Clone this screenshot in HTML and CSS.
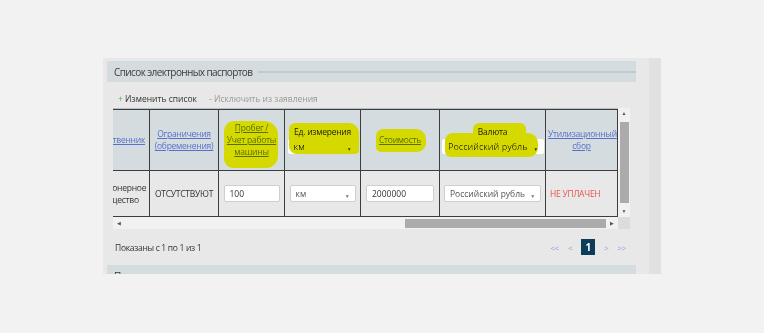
FILE: index.html
```html
<!DOCTYPE html>
<html lang="ru">
<head>
    <meta charset="UTF-8">
    <meta name="viewport" content="width=device-width, initial-scale=1.0">
    <title>Список электронных паспортов</title>
    <link rel="stylesheet" href="styles.css">
</head>
<body>
    <div class="page">
        <div class="panel">
            <div class="panel-main">
                <div class="section-title"><span>Список электронных паспортов</span></div>

                <div class="toolbar">
                    <a class="tool tool-add"><b>+</b> Изменить список</a>
                    <a class="tool tool-remove"><b>-</b> Исключить из заявления</a>
                </div>

                <div class="grid-box">
                    <div class="viewport">
                        <table class="passports">
                            <colgroup>
                                <col class="c1"><col class="c2"><col class="c3"><col class="c4">
                                <col class="c5"><col class="c6"><col class="c7">
                            </colgroup>
                            <thead>
                                <tr>
                                    <th><a href="#">Собственник</a></th>
                                    <th><a href="#">Ограничения (обременения)</a></th>
                                    <th>
                                        <span class="mark mark-run"></span>
                                        <a href="#">Пробег /<br>Учет работы<br>машины</a>
                                    </th>
                                    <th>
                                        <span class="mark mark-unit"></span>
                                        <div class="th-label">Ед. измерения</div>
                                        <span class="select select-head"><select><option>км</option></select></span>
                                    </th>
                                    <th>
                                        <span class="mark mark-cost"></span>
                                        <a href="#">Стоимость</a>
                                    </th>
                                    <th>
                                        <span class="mark mark-cur1"></span>
                                        <span class="mark mark-cur2"></span>
                                        <div class="th-label">Валюта</div>
                                        <span class="select select-head wide"><select><option>Российский рубль</option></select></span>
                                    </th>
                                    <th><a href="#">Утилизационный сбор</a></th>
                                </tr>
                            </thead>
                            <tbody>
                                <tr>
                                    <td>Акционерное общество</td>
                                    <td>ОТСУТСТВУЮТ</td>
                                    <td><input class="field" type="text" value="100"></td>
                                    <td><span class="select"><select><option>км</option></select></span></td>
                                    <td><input class="field field-cost" type="text" value="2000000"></td>
                                    <td><span class="select wide"><select><option>Российский рубль</option></select></span></td>
                                    <td class="unpaid">НЕ УПЛАЧЕН</td>
                                </tr>
                            </tbody>
                        </table>
                    </div>
                    <div class="vscroll">
                        <span class="arrow">&#9650;</span>
                        <span class="vthumb"></span>
                        <span class="arrow">&#9660;</span>
                    </div>
                    <div class="hscroll">
                        <span class="arrow">&#9664;</span>
                        <span class="htrack"><span class="hthumb"></span></span>
                        <span class="arrow">&#9654;</span>
                    </div>
                    <div class="corner"></div>
                </div>

                <div class="footer">
                    <span class="summary">Показаны с 1 по 1 из 1</span>
                    <div class="pager">
                        <a href="#">&lt;&lt;</a>
                        <a href="#">&lt;</a>
                        <span class="current">1</span>
                        <a href="#">&gt;</a>
                        <a href="#">&gt;&gt;</a>
                    </div>
                </div>

                <div class="section-title"><span>Прилагаемые документы</span></div>
            </div>
            <div class="panel-side"></div>
        </div>
    </div>
</body>
</html>
```

FILE: styles.css
```css
body {
    margin: 0;
    background-color: #f2f2f2;
    font-family: "Open Sans", Arial, sans-serif;
    color: #333;
}
.page {
    padding: 58px 0 0 103px;
}
.panel {
    width: 558px;
    height: 216px;
    overflow: hidden;
    background-color: #e8e8e8;
    display: flex;
}
.panel-main {
    flex: 1;
    padding: 3px 13px 0 4px;
}
.panel-side {
    width: 12px;
    background-color: #e1e1e1;
}
.section-title {
    height: 21px;
    background-color: #d5dce0;
    display: flex;
    align-items: center;
    padding-left: 7px;
    font-size: 10px;
    letter-spacing: -0.6px;
    color: #3a3a3a;
}
.section-title::after {
    content: "";
    flex: 1;
    height: 2px;
    margin-left: 6px;
    background-color: #c3cace;
}
.toolbar {
    height: 19px;
    padding: 7px 0 0 11px;
    display: flex;
    align-items: center;
    gap: 12px;
    font-size: 8.5px;
}
.tool b {
    font-weight: normal;
}
.tool-add {
    color: #333;
}
.tool-add b {
    color: #5aa64a;
}
.tool-remove {
    color: #999;
}
.tool-remove b {
    color: #e57373;
}

/* table with fake scrollbars */
.grid-box {
    margin-left: 6px;
    width: 517px;
    display: grid;
    grid-template-columns: 505px 12px;
    grid-template-rows: 109px 12px;
}
.viewport {
    overflow: hidden;
    border-top: 1px solid #b9bec2;
}
.passports {
    table-layout: fixed;
    border-collapse: collapse;
    width: 528px;
    margin-left: -24px;
    font-size: 8.5px;
    letter-spacing: -0.25px;
}
.c1 { width: 60px; }
.c2 { width: 69px; }
.c3 { width: 66px; }
.c4 { width: 76px; }
.c5 { width: 79px; }
.c6 { width: 106px; }
.c7 { width: 72px; }
.passports th,
.passports td {
    border: 1px solid #3d3d3d;
    text-align: center;
    vertical-align: middle;
    padding: 0 2px;
    position: relative;
}
.passports th {
    height: 60px;
    background-color: #d5dce0;
    font-weight: normal;
    line-height: 12px;
}
.passports td {
    height: 45px;
    background-color: #e8e8e8;
    line-height: 12px;
}
.passports a {
    color: #5a6fc9;
    position: relative;
}
.th-label {
    color: #222;
    margin-bottom: 1px;
}
.unpaid {
    color: #e8554b;
    text-align: left !important;
    padding-left: 4px !important;
}
.field {
    box-sizing: border-box;
    width: 56px;
    height: 17px;
    border: 1px solid #cfcfcf;
    border-radius: 2px;
    background: #fff;
    font: inherit;
    color: #333;
    padding: 0 5px;
}
.field-cost {
    width: 68px;
}
.select {
    display: inline-block;
    position: relative;
    width: 66px;
}
.select.wide {
    width: 97px;
}
.select select {
    appearance: none;
    -webkit-appearance: none;
    box-sizing: border-box;
    width: 100%;
    height: 17px;
    border: 1px solid #cfcfcf;
    border-radius: 2px;
    background: #fff;
    font: inherit;
    color: #555;
    padding: 0 5px;
    display: block;
}
.select::after {
    content: "\25BC";
    position: absolute;
    right: 6px;
    top: 5px;
    font-size: 5px;
    color: #777;
}
.select-head {
    width: 70px;
}
.select-head.wide {
    width: 102px;
}
.select-head select {
    height: 15px;
    border-color: #fff;
    color: #222;
    font-size: 9px;
}
.select-head::after {
    top: 4px;
    color: #333;
}

/* marker highlights */
.mark {
    position: absolute;
    background-color: #d6d900;
    mix-blend-mode: darken;
    z-index: 2;
    border-radius: 9px 12px 8px 11px;
}
.mark-run { left: 5px; top: 11px; width: 54px; height: 47px; border-radius: 10px 14px 12px 9px; }
.mark-unit { left: 4px; top: 13px; width: 70px; height: 31px; border-radius: 6px 10px 4px 8px; }
.mark-cost { left: 15px; top: 19px; width: 50px; height: 23px; border-radius: 7px 10px 9px 5px; }
.mark-cur1 { left: 33px; top: 13px; width: 53px; height: 16px; border-radius: 6px; }
.mark-cur2 { left: 5px; top: 23px; width: 93px; height: 24px; border-radius: 8px 10px 9px 6px; }

.vscroll {
    background-color: #f1f1f1;
    display: flex;
    flex-direction: column;
    align-items: center;
}
.vthumb {
    flex: 1;
    width: 9px;
    margin: 3px 0;
    background-color: #ababab;
}
.hscroll {
    background-color: #f1f1f1;
    display: flex;
    align-items: center;
}
.htrack {
    flex: 1;
    height: 9px;
    padding-left: 280px;
}
.hthumb {
    display: block;
    height: 9px;
    background-color: #ababab;
}
.arrow {
    font-size: 5px;
    color: #555;
    width: 12px;
    line-height: 11px;
    text-align: center;
}
.corner {
    background-color: #dcdcdc;
}

.footer {
    height: 36px;
    display: flex;
    align-items: center;
    justify-content: space-between;
    padding: 0 10px 0 8px;
    font-size: 8.5px;
    letter-spacing: -0.3px;
}
.pager {
    display: flex;
    align-items: center;
    gap: 9px;
    font-size: 8px;
}
.pager a {
    color: #8e9cd8;
    text-decoration: none;
}
.pager .current {
    background-color: #0d3b5c;
    color: #fff;
    width: 14px;
    height: 16px;
    line-height: 16px;
    text-align: center;
    font-size: 10px;
    font-weight: bold;
}
```
